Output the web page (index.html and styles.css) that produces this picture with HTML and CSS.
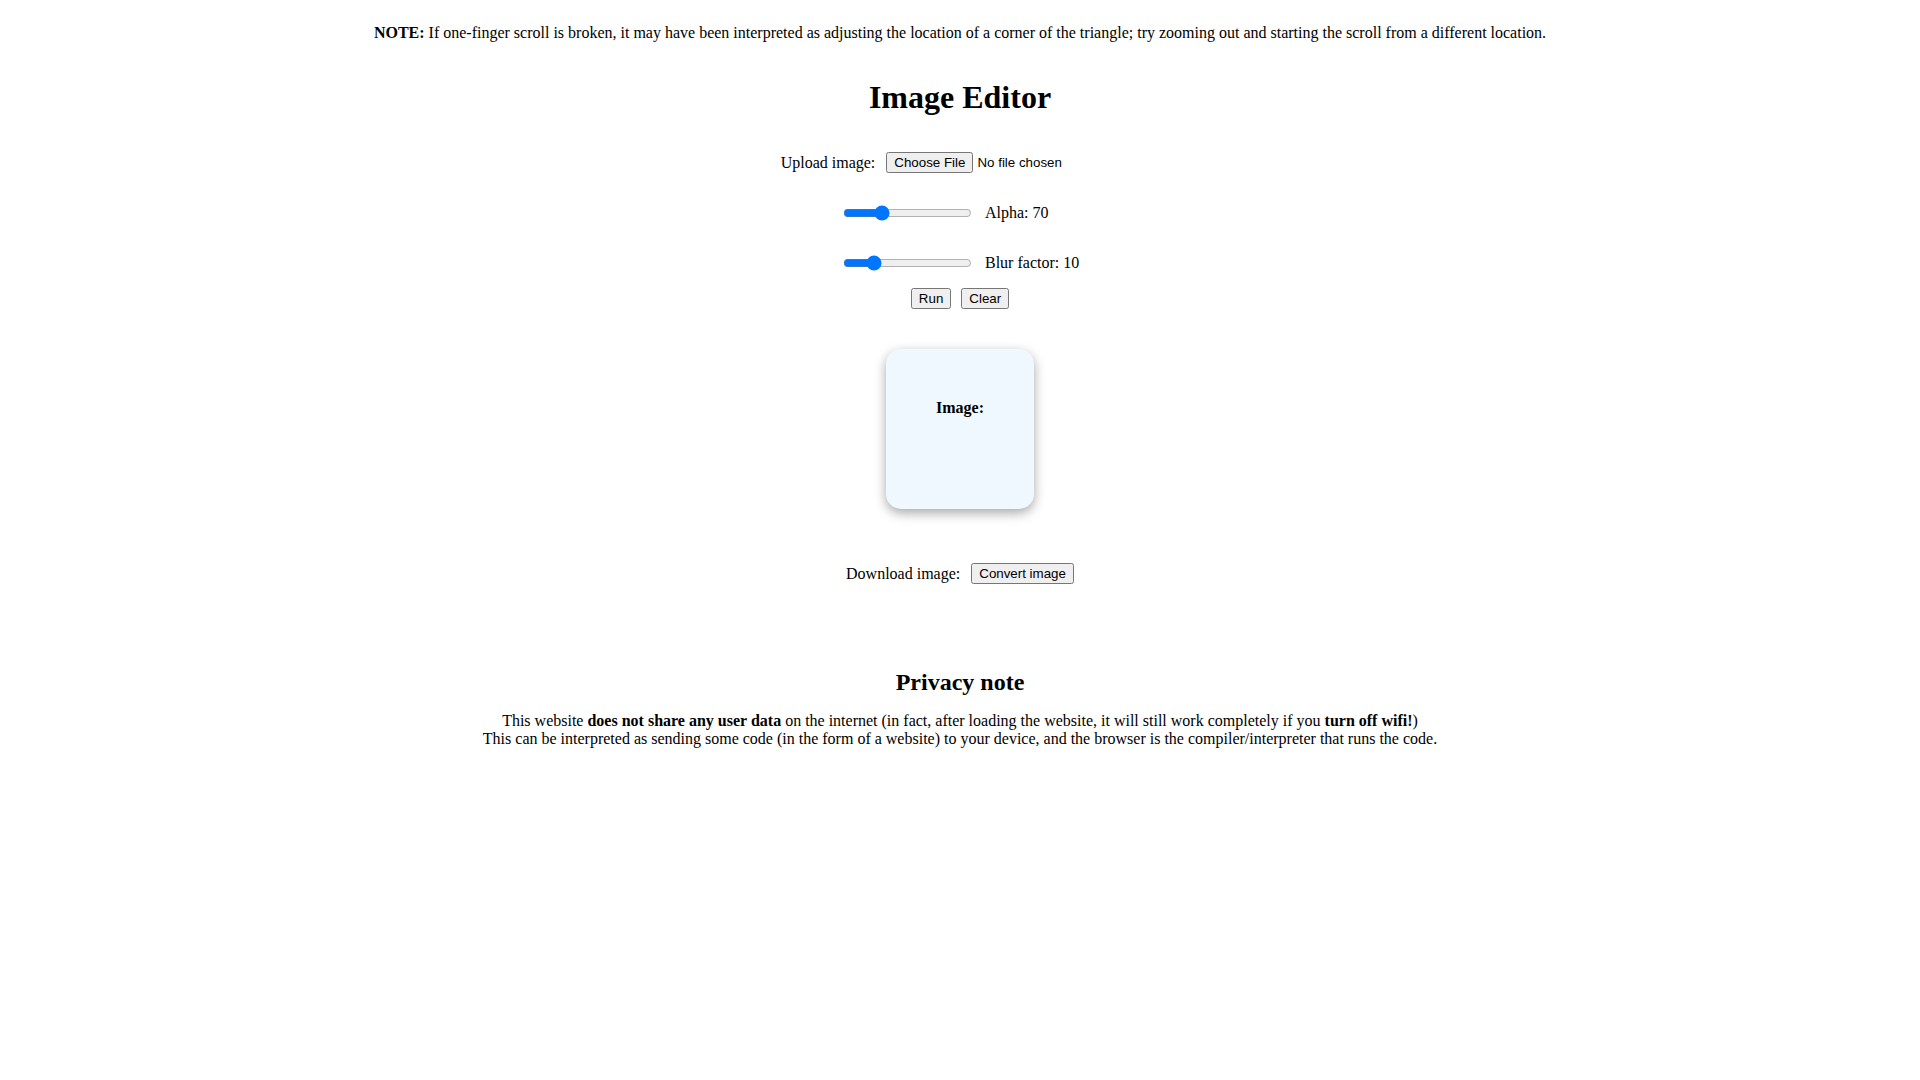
FILE: index.html
```html
<!DOCTYPE html>
<html lang="en">
<head>
<meta charset="utf-8">
<title>Image Editor</title>
<link rel="stylesheet" href="styles.css">
</head>
<body>
<p class="note"><b>NOTE:</b> If one-finger scroll is broken, it may have been interpreted as adjusting the location of a corner of the triangle; try zooming out and starting the scroll from a different location.</p>
<h1 class="title">Image Editor</h1>
<div class="row upload">
  <label class="label" for="file">Upload image:</label>
  <input id="file" type="file">
</div>
<div class="sliders">
  <input class="range" type="range" min="0" max="255" value="70">
  <span class="label">Alpha: 70</span>
  <input class="range" type="range" min="0" max="50" value="10">
  <span class="label">Blur factor: 10</span>
</div>
<div class="row actions">
  <button type="button">Run</button>
  <button type="button">Clear</button>
</div>
<div class="card">
  <h4 class="card-title">Image:</h4>
</div>
<div class="row download">
  <span class="label">Download image:</span>
  <button type="button">Convert image</button>
</div>
<h2 class="privacy-title">Privacy note</h2>
<p class="privacy">This website <b>does not share any user data</b> on the internet (in fact, after loading the website, it will still work completely if you <b>turn off wifi!</b>)<br>This can be interpreted as sending some code (in the form of a website) to your device, and the browser is the compiler/interpreter that runs the code.</p>
</body>
</html>
```
FILE: styles.css
```css
html, body {
  background: #ffffff;
}
body {
  margin: 0;
  font-family: "Liberation Serif", "Times New Roman", serif;
  font-size: 16px;
  color: #000;
}
.note {
  margin: 0;
  padding-top: 24px;
  text-align: center;
}
.title {
  margin: 36.6px 0 0;
  font-size: 32px;
  font-weight: bold;
  text-align: center;
}
.row {
  display: flex;
  justify-content: center;
  align-items: center;
  gap: 11px;
  height: 22px;
}
.upload {
  margin-top: 36px;
}
.sliders {
  display: grid;
  grid-template-columns: auto 94px;
  grid-auto-rows: 22px;
  justify-content: center;
  align-items: center;
  column-gap: 11px;
  row-gap: 28px;
  margin-top: 28.1px;
}
.label {
  white-space: nowrap;
}
.actions {
  margin-top: 13.4px;
  gap: 10px;
}
.card {
  box-sizing: border-box;
  width: 148px;
  height: 160px;
  margin: 39.7px auto 0;
  padding-top: 50px;
  border-radius: 15px;
  background: #f0f8ff;
  box-shadow: 0 4px 12px rgba(0, 0, 0, 0.35);
  text-align: center;
}
.card-title {
  margin: 0;
  font-size: 16px;
  font-weight: bold;
}
.download {
  margin-top: 54px;
}
.privacy-title {
  margin: 84.5px 0 0;
  font-size: 24px;
  font-weight: bold;
  text-align: center;
}
.privacy {
  margin: 15.5px 0 0;
  text-align: center;
}
```
